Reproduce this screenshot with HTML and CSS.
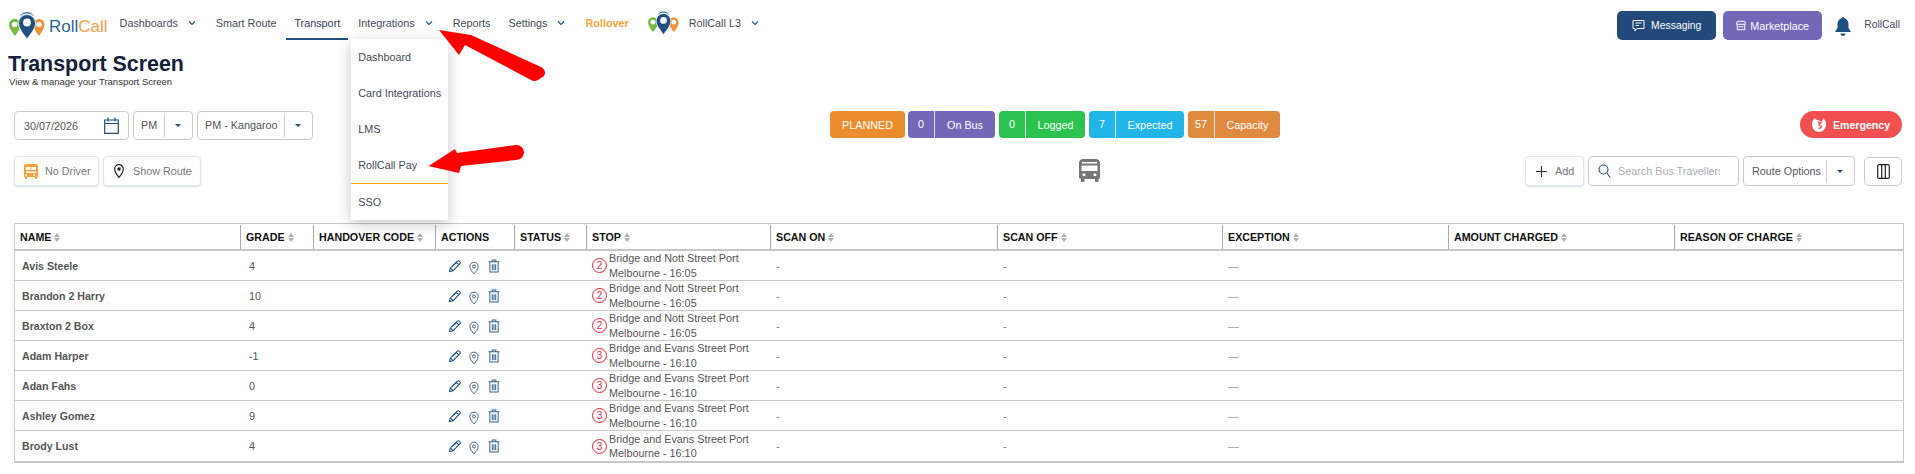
FILE: index.html
```html
<!DOCTYPE html>
<html lang="en">
<head>
    <meta charset="UTF-8">
    <title>Transport Screen</title>
    <link rel="stylesheet" href="styles.css">
</head>
<body>
    <svg class="sprite" width="0" height="0">
        <symbol id="logo" viewBox="0 0 36 27">
            <path d="M6 24C3 20 0 16.500 0 12.500a5.700 5.700 0 0 1 11.400 0C11.400 16.500 9 20 6 24Z" fill="#7cb84a"/>
            <circle cx="5.700" cy="12.500" r="2.800" fill="#fff"/>
            <path d="M30 24c-3-4-5.500-7.500-5.500-11.500a5.500 5.500 0 0 1 11 0C35.500 16.500 33 20 30 24Z" fill="#f0923a"/>
            <circle cx="30" cy="12.500" r="2.700" fill="#fff"/>
            <path d="M18 27C14 21.500 9.500 16.500 9.500 11a8.500 8.500 0 0 1 17 0C26.500 16.500 22 21.500 18 27Z" fill="#1f5080" stroke="#fff" stroke-width=".8"/>
            <circle cx="18" cy="10.500" r="3.900" fill="#fff"/>
            <path d="M11.500 3.500a9.500 9.500 0 0 1 13 0M13.500 1.500a10 10 0 0 1 9 0" fill="none" stroke="#3f77a6" stroke-width=".9"/>
        </symbol>
        <symbol id="chevron" viewBox="0 0 8 6">
            <path d="M1 1.500l3 3 3-3" fill="none" stroke="#1f5080" stroke-width="1.100"/>
        </symbol>
        <symbol id="pencil" viewBox="0 0 14 14">
            <path d="M1.500 12.500l1-4L10 1.200c.7-.6 1.500-.6 2.100 0l.7.7c.6.600.6 1.400 0 2.100L5.500 11.500ZM2.500 8.500l3 3M9 2.500l2.500 2.500M4 7.500l5.500-5" fill="none" stroke="#1f5080" stroke-width="1.100"/>
        </symbol>
        <symbol id="pin" viewBox="0 0 12 16">
            <path d="M6 15C3.500 12 1 9.500 1 6a5 5 0 0 1 10 0C11 9.500 8.500 12 6 15Z" fill="none" stroke="#1f4a70" stroke-width="1"/>
            <circle cx="6" cy="6.200" r="1.800" fill="none" stroke="#1f4a70" stroke-width="1"/>
        </symbol>
        <symbol id="trash" viewBox="0 0 13 15">
            <path d="M.5 3h12M4.500 3V1h4v2M2 3v11h9V3M4.700 5.500v6.500M6.500 5.500v6.500M8.300 5.500v6.500" fill="none" stroke="#3a6488" stroke-width="1.100"/>
        </symbol>
    </svg>

    <header class="topbar">
        <svg class="logo"><use href="#logo"/></svg>
        <span class="brand"><span class="brand-roll">Roll</span><span class="brand-call">Call</span></span>
        <nav class="nav">
            <a class="nav-item">Dashboards <svg class="chev"><use href="#chevron"/></svg></a>
            <a class="nav-item">Smart Route</a>
            <a class="nav-item active">Transport</a>
            <div class="nav-item">Integrations <svg class="chev"><use href="#chevron"/></svg>
                <div class="menu">
                    <a class="menu-item">Dashboard</a>
                    <a class="menu-item">Card Integrations</a>
                    <a class="menu-item">LMS</a>
                    <a class="menu-item current">RollCall Pay</a>
                    <a class="menu-item">SSO</a>
                </div>
            </div>
            <a class="nav-item">Reports</a>
            <a class="nav-item">Settings <svg class="chev"><use href="#chevron"/></svg></a>
            <a class="nav-item rollover">Rollover</a>
            <svg class="logo-small"><use href="#logo"/></svg>
            <a class="nav-item">RollCall L3 <svg class="chev"><use href="#chevron"/></svg></a>
        </nav>
        <div class="top-actions">
            <button class="top-btn messaging">
                <svg width="13" height="13" viewBox="0 0 13 13"><path d="M1 1.500h11v8H5l-2 2.500v-2.500H1ZM3.500 4h6M3.500 6.500h3.500" fill="none" stroke="#fff" stroke-width="1"/></svg>
                Messaging
            </button>
            <button class="top-btn marketplace">
                <svg width="10" height="11" viewBox="0 0 12 12"><path d="M1.500 1h9l1 3.500H.5ZM1.500 5v6h9V5M3 7.500h6" fill="none" stroke="#fff" stroke-width="1.200"/></svg>
                Marketplace
            </button>
            <svg class="bell" width="16" height="19" viewBox="0 0 16 19"><path d="M8 0c.8 0 1.200.6 1.200 1.300C12 2 13.500 4.500 13.500 7.500v3.500L16 15H0l2.500-4V7.500c0-3 1.500-5.500 4.300-6.200C6.800.6 7.200 0 8 0ZM5.500 16.500h5c0 1.500-1 2.500-2.500 2.500s-2.500-1-2.500-2.500Z" fill="#1f5080"/></svg>
            <span class="user">RollCall</span>
        </div>
    </header>

    <div class="page-title">
        <h1>Transport Screen</h1>
        <p>View &amp; manage your Transport Screen</p>
    </div>

    <section class="row-controls">
        <div class="control-group">
            <div class="field date-field">
                <span>30/07/2026</span>
                <svg width="15" height="17" viewBox="0 0 15 17"><path d="M.7 3h13.600v13.300H.7ZM.7 6.500h13.600M4 .5v4M11 .5v4" fill="none" stroke="#1f5080" stroke-width="1.200"/></svg>
            </div>
            <div class="field select-field period"><span class="select-label">PM</span><span class="select-caret"></span></div>
            <div class="field select-field bus"><span class="select-label">PM - Kangaroo</span><span class="select-caret"></span></div>
        </div>
        <div class="badges">
            <span class="badge planned"><span class="badge-text">PLANNED</span></span>
            <span class="badge onbus"><span class="badge-num">0</span><span class="badge-text">On Bus</span></span>
            <span class="badge logged"><span class="badge-num">0</span><span class="badge-text">Logged</span></span>
            <span class="badge expected"><span class="badge-num">7</span><span class="badge-text">Expected</span></span>
            <span class="badge capacity"><span class="badge-num">57</span><span class="badge-text">Capacity</span></span>
        </div>
        <button class="emergency">
            <svg width="14" height="15" viewBox="0 0 14 15"><path d="M3 1c-2 1.500-3 3.500-3 6.500C0 11.500 3 15 7 15s7-3.500 7-7.500C14 4.500 13 2.500 11 1c.5 2-.5 3-2 3.500C7.500 3.500 6 3 5 3 4 3 3.300 2.200 3 1Z" fill="#fff"/><path d="M6 5.500h3L7 8l2.500 1.500c-.5 1.500-2 2-3.500 1.500" fill="none" stroke="#f25050" stroke-width="1.300"/></svg>
            Emergency
        </button>
    </section>

    <section class="row-tools">
        <div class="control-group">
            <button class="tool-btn driver">
                <svg width="14" height="15" viewBox="0 0 14 15"><path d="M2 0h10c1 0 2 1 2 2v10c0 .8-.5 1-1 1v2h-2v-2H3v2H1v-2c-.5 0-1-.2-1-1V2C0 1 1 0 2 0Zm0 3v3h4.500V3Zm5.500 0v3H12V3ZM2 7.500V9h10V7.500ZM3 10.300a1 1 0 1 0 0 1.400Zm8 0a1 1 0 1 0 0 1.400Z" fill="#f5a53a" fill-rule="evenodd"/></svg>
                No Driver
            </button>
            <button class="tool-btn route">
                <svg width="10" height="14" viewBox="0 0 10 14"><path d="M5 13.300C3 11 .7 8.500.7 5a4.300 4.300 0 0 1 8.600 0C9.300 8.500 7 11 5 13.300Z" fill="none" stroke="#222" stroke-width="1.200"/><circle cx="5" cy="5" r="1.800" fill="#222"/></svg>
                Show Route
            </button>
        </div>
        <svg class="bus-icon" width="21" height="23" viewBox="0 0 21 23"><path d="M4 0h13c2 0 4 1.500 4 4v14c0 1-.5 1.500-1.500 1.800V22a1 1 0 0 1-1 1h-1.500a1 1 0 0 1-1-1v-2H5.500v2a1 1 0 0 1-1 1H3a1 1 0 0 1-1-1v-2.200C.5 19.500 0 19 0 18V4C0 1.500 2 0 4 0Zm-1 3v1.500h15V3Zm-.5 3.500V12h16V6.500ZM5 14.300a1.500 1.500 0 1 0 0 3 1.500 1.500 0 0 0 0-3Zm11 0a1.500 1.500 0 1 0 0 3 1.500 1.500 0 0 0 0-3Z" fill="#777" fill-rule="evenodd"/></svg>
        <div class="tools-right">
            <button class="tool-btn add">
                <svg width="13" height="13" viewBox="0 0 13 13"><path d="M6.500 1v11M1 6.500h11" fill="none" stroke="#333" stroke-width="1.100"/></svg>
                Add
            </button>
            <div class="field search">
                <svg width="13" height="14" viewBox="0 0 13 14"><circle cx="5.500" cy="5.500" r="4.500" fill="none" stroke="#1f5080" stroke-width="1.100"/><path d="M8.800 9l3.500 4.500" stroke="#1f5080" stroke-width="1.100"/></svg>
                <input class="search-input" placeholder="Search Bus Travellers">
            </div>
            <div class="field select-field route-options"><span class="select-label">Route Options</span><span class="select-caret"></span></div>
            <button class="columns-btn">
                <svg width="13" height="15" viewBox="0 0 13 15"><path d="M2 .7h9c.7 0 1.300.6 1.300 1.300v11c0 .7-.6 1.300-1.300 1.300H2c-.7 0-1.300-.6-1.300-1.300V2C.7 1.300 1.300.7 2 .7ZM4.700.7v13.600M8.300.7v13.600" fill="none" stroke="#222" stroke-width="1.200"/></svg>
            </button>
        </div>
    </section>

    <table class="travellers">
        <colgroup>
            <col class="c-name"><col class="c-grade"><col class="c-code"><col class="c-actions"><col class="c-status"><col class="c-stop">
            <col class="c-on"><col class="c-off"><col class="c-exc"><col class="c-amount"><col class="c-reason">
        </colgroup>
        <thead>
            <tr>
                <th><span class="th-box">NAME <i class="sort"></i></span></th>
                <th><span class="th-box">GRADE <i class="sort"></i></span></th>
                <th><span class="th-box">HANDOVER CODE <i class="sort"></i></span></th>
                <th><span class="th-box">ACTIONS</span></th>
                <th><span class="th-box">STATUS <i class="sort"></i></span></th>
                <th><span class="th-box">STOP <i class="sort"></i></span></th>
                <th><span class="th-box">SCAN ON <i class="sort"></i></span></th>
                <th><span class="th-box">SCAN OFF <i class="sort"></i></span></th>
                <th><span class="th-box">EXCEPTION <i class="sort"></i></span></th>
                <th><span class="th-box">AMOUNT CHARGED <i class="sort"></i></span></th>
                <th><span class="th-box">REASON OF CHARGE <i class="sort"></i></span></th>
            </tr>
        </thead>
        <tbody>
            <tr>
                <td class="name">Avis Steele</td><td class="grade">4</td><td></td>
                <td><div class="row-actions"><svg class="a-pencil"><use href="#pencil"/></svg><svg class="a-pin"><use href="#pin"/></svg><svg class="a-trash"><use href="#trash"/></svg></div></td>
                <td></td>
                <td><div class="stop"><span class="stop-num">2</span><span class="stop-text">Bridge and Nott Street Port Melbourne - 16:05</span></div></td>
                <td class="dash">-</td><td class="dash">-</td><td class="long-dash">—</td><td></td><td></td>
            </tr>
            <tr>
                <td class="name">Brandon 2 Harry</td><td class="grade">10</td><td></td>
                <td><div class="row-actions"><svg class="a-pencil"><use href="#pencil"/></svg><svg class="a-pin"><use href="#pin"/></svg><svg class="a-trash"><use href="#trash"/></svg></div></td>
                <td></td>
                <td><div class="stop"><span class="stop-num">2</span><span class="stop-text">Bridge and Nott Street Port Melbourne - 16:05</span></div></td>
                <td class="dash">-</td><td class="dash">-</td><td class="long-dash">—</td><td></td><td></td>
            </tr>
            <tr>
                <td class="name">Braxton 2 Box</td><td class="grade">4</td><td></td>
                <td><div class="row-actions"><svg class="a-pencil"><use href="#pencil"/></svg><svg class="a-pin"><use href="#pin"/></svg><svg class="a-trash"><use href="#trash"/></svg></div></td>
                <td></td>
                <td><div class="stop"><span class="stop-num">2</span><span class="stop-text">Bridge and Nott Street Port Melbourne - 16:05</span></div></td>
                <td class="dash">-</td><td class="dash">-</td><td class="long-dash">—</td><td></td><td></td>
            </tr>
            <tr>
                <td class="name">Adam Harper</td><td class="grade">-1</td><td></td>
                <td><div class="row-actions"><svg class="a-pencil"><use href="#pencil"/></svg><svg class="a-pin"><use href="#pin"/></svg><svg class="a-trash"><use href="#trash"/></svg></div></td>
                <td></td>
                <td><div class="stop"><span class="stop-num">3</span><span class="stop-text">Bridge and Evans Street Port Melbourne - 16:10</span></div></td>
                <td class="dash">-</td><td class="dash">-</td><td class="long-dash">—</td><td></td><td></td>
            </tr>
            <tr>
                <td class="name">Adan Fahs</td><td class="grade">0</td><td></td>
                <td><div class="row-actions"><svg class="a-pencil"><use href="#pencil"/></svg><svg class="a-pin"><use href="#pin"/></svg><svg class="a-trash"><use href="#trash"/></svg></div></td>
                <td></td>
                <td><div class="stop"><span class="stop-num">3</span><span class="stop-text">Bridge and Evans Street Port Melbourne - 16:10</span></div></td>
                <td class="dash">-</td><td class="dash">-</td><td class="long-dash">—</td><td></td><td></td>
            </tr>
            <tr>
                <td class="name">Ashley Gomez</td><td class="grade">9</td><td></td>
                <td><div class="row-actions"><svg class="a-pencil"><use href="#pencil"/></svg><svg class="a-pin"><use href="#pin"/></svg><svg class="a-trash"><use href="#trash"/></svg></div></td>
                <td></td>
                <td><div class="stop"><span class="stop-num">3</span><span class="stop-text">Bridge and Evans Street Port Melbourne - 16:10</span></div></td>
                <td class="dash">-</td><td class="dash">-</td><td class="long-dash">—</td><td></td><td></td>
            </tr>
            <tr>
                <td class="name">Brody Lust</td><td class="grade">4</td><td></td>
                <td><div class="row-actions"><svg class="a-pencil"><use href="#pencil"/></svg><svg class="a-pin"><use href="#pin"/></svg><svg class="a-trash"><use href="#trash"/></svg></div></td>
                <td></td>
                <td><div class="stop"><span class="stop-num">3</span><span class="stop-text">Bridge and Evans Street Port Melbourne - 16:10</span></div></td>
                <td class="dash">-</td><td class="dash">-</td><td class="long-dash">—</td><td></td><td></td>
            </tr>
        </tbody>
    </table>

    <!-- annotation arrows drawn over the screenshot -->
    <svg class="annotation" width="1915" height="474" viewBox="0 0 1915 474">
        <path d="M439 30L471 35L541 67Q547 71 544 76L538 80Q534 82 531 80L465 45L459 55Z" fill="#f00"/>
        <path d="M428.500 166L455 149L457 153L516 145Q523 145 524 152Q524 159 516 160L461 166L459 173Z" fill="#f00"/>
    </svg>
</body>
</html>
```

FILE: styles.css
```css
* {
    margin: 0;
    padding: 0;
    box-sizing: border-box;
}

html, body {
    width: 100%;
    height: 100%;
    overflow: hidden;
    background: #ffffff;
    font-family: "Liberation Sans", Arial, sans-serif;
    font-size: 10.8px;
    color: #444c58;
}

.sprite {
    position: absolute;
}

button {
    font-family: inherit;
    font-size: inherit;
    cursor: pointer;
}

/* top bar */
.topbar {
    display: flex;
    height: 40px;
    padding: 10px 15px 0 9px;
}

.logo {
    width: 36px;
    height: 27px;
    margin-top: 2px;
}

.brand {
    margin-left: 4px;
    font-size: 17px;
    line-height: 34px;
}

.brand-roll {
    color: #2a6496;
}

.brand-call {
    color: #f5a04a;
}

.nav {
    display: flex;
    gap: 2px;
    margin-left: 4px;
}

.nav-item {
    position: relative;
    display: flex;
    align-items: center;
    gap: 6px;
    height: 30px;
    padding: 0 8px 3px;
    white-space: nowrap;
    border-bottom: 2px solid transparent;
}

.nav-item.active {
    color: #33405a;
    border-bottom-color: #1f5080;
}

.nav-item.rollover {
    font-weight: 700;
    color: #f5a53a;
}

.chev {
    width: 8px;
    height: 6px;
    margin: 0 2px 0 4px;
}

.logo-small {
    width: 31px;
    height: 24px;
    margin: 1px 0 0 9px;
}

.menu {
    position: absolute;
    z-index: 5;
    top: 29px;
    left: 1px;
    display: flex;
    flex-direction: column;
    width: 97px;
    height: 181px;
    background: #ffffff;
    box-shadow: 0 4px 14px rgba(0, 0, 0, 0.22);
}

.menu-item {
    display: flex;
    align-items: center;
    flex: none;
    height: 36px;
    padding-left: 7px;
}

.menu-item.current {
    height: 37px;
    padding-bottom: 1px;
    border-bottom: 1px solid #f5a623;
}

.top-actions {
    display: flex;
    align-items: flex-start;
    margin-left: auto;
    font-size: 10.4px;
}

.top-btn {
    display: flex;
    align-items: center;
    justify-content: center;
    gap: 6px;
    width: 99px;
    height: 29px;
    margin: 1px 0 0;
    border: none;
    border-radius: 5px;
    color: #ffffff;
}

.top-btn.messaging {
    background: #22497a;
}

.top-btn.marketplace {
    gap: 4px;
    margin-left: 7px;
    background: #7467b8;
    font-size: 10.8px;
}

.bell {
    margin: 7px 0 0 13px;
}

.user {
    margin: 9px 0 0 13px;
}

/* title */
.page-title {
    margin: 12px 0 0 8px;
}

.page-title h1 {
    font-size: 21.4px;
    line-height: 24px;
    font-weight: 700;
    color: #15213a;
}

.page-title p {
    margin-left: 1px;
    font-size: 9.5px;
    line-height: 12px;
    color: #333;
}

/* controls */
.row-controls {
    display: grid;
    grid-template-columns: 816px 450px 1fr;
    margin-top: 23px;
    padding: 0 13px 0 14px;
}

.control-group {
    display: flex;
    gap: 4px;
}

.field {
    display: flex;
    align-items: center;
    height: 29px;
    background: #ffffff;
    border: 1px solid #cccccc;
    border-radius: 4px;
    color: #555;
}

.date-field {
    justify-content: space-between;
    width: 115px;
    padding: 0 9px;
}

.select-field {
    padding-left: 7px;
}

.select-label {
    flex: 1;
    line-height: 27px;
    white-space: nowrap;
}

.select-caret {
    position: relative;
    flex: none;
    width: 28px;
    height: 23px;
    border-left: 1px solid #cccccc;
}

.select-caret::after {
    content: "";
    position: absolute;
    top: 10px;
    left: 10px;
    border-top: 3px solid #1f5080;
    border-left: 3px solid transparent;
    border-right: 3px solid transparent;
}

.select-field.period {
    width: 60px;
}

.select-field.bus {
    width: 116px;
}

.select-field.route-options {
    width: 112px;
    height: 30px;
    padding-left: 8px;
}

.badges {
    display: flex;
    gap: 3px;
    color: #ffffff;
}

.badge {
    display: flex;
    align-items: center;
    justify-content: center;
    height: 27px;
    border-radius: 4px;
}

.badge-num {
    flex: none;
    width: 27px;
    line-height: 27px;
    text-align: center;
    border-right: 1px solid rgba(255, 255, 255, 0.8);
}

.badge-text {
    flex: 1;
    text-align: center;
}

.badge.planned {
    width: 75px;
    background: #eb8c2e;
}

.badge.onbus {
    width: 87px;
    background: #7467b8;
}

.badge.logged {
    width: 86px;
    margin-left: 1px;
    background: #2cc24f;
}

.badge.expected {
    width: 95px;
    margin-left: 1px;
    background: #22b5e8;
}

.badge.capacity {
    width: 92px;
    margin-left: 1px;
    background: #e08a40;
}

.emergency {
    display: flex;
    align-items: center;
    justify-content: center;
    gap: 7px;
    justify-self: end;
    width: 102px;
    height: 27px;
    border: none;
    border-radius: 14px;
    background: #f25050;
    color: #ffffff;
    font-weight: 700;
    font-size: 10.6px;
}

.row-tools {
    display: flex;
    align-items: flex-start;
    margin-top: 16px;
    padding: 0 13px 0 14px;
}

.tool-btn {
    display: flex;
    align-items: center;
    height: 30px;
    background: #ffffff;
    border: 1px solid #dfe8e8;
    border-radius: 4px;
    box-shadow: 0 1px 2px rgba(120, 150, 150, 0.3);
    color: #777;
}

.tool-btn.driver {
    gap: 7px;
    width: 85px;
    padding-left: 9px;
}

.tool-btn.route {
    gap: 9px;
    width: 98px;
    padding-left: 10px;
}

.tool-btn.add {
    gap: 7px;
    width: 59px;
    padding-left: 9px;
}

.bus-icon {
    margin: 3px 0 0 878px;
}

.tools-right {
    display: flex;
    gap: 4px;
    margin-left: auto;
}

.field.search {
    gap: 7px;
    width: 151px;
    height: 30px;
    padding-left: 9px;
}

.search-input {
    width: 102px;
    border: none;
    outline: none;
    font-family: inherit;
    font-size: 10.8px;
}

.search-input::placeholder {
    color: #aab0b5;
}

.columns-btn {
    display: flex;
    align-items: center;
    justify-content: center;
    width: 38px;
    height: 29px;
    margin: 1px 0 0 5px;
    background: #ffffff;
    border: 1px solid #cccccc;
    border-radius: 5px;
}

/* table */
.travellers {
    width: 1888px;
    margin: 37px 0 0 14px;
    table-layout: fixed;
    border-collapse: separate;
    border-spacing: 0;
    border: 1px solid #c8c8c8;
    border-bottom-width: 2px;
}

.c-name { width: 226px; }
.c-grade { width: 73px; }
.c-code { width: 122px; }
.c-actions { width: 79px; }
.c-status { width: 72px; }
.c-stop { width: 184px; }
.c-on { width: 227px; }
.c-off { width: 225px; }
.c-exc { width: 226px; }
.c-amount { width: 226px; }
.c-reason { width: 228px; }

.travellers th {
    height: 26px;
    padding: 1px 0 0;
    text-align: left;
    border-bottom: 2px solid #c8c8c8;
}

.th-box {
    display: flex;
    align-items: center;
    gap: 3px;
    height: 24px;
    padding-left: 5px;
    border-right: 1px solid #aaaaaa;
    font-size: 10.7px;
    font-weight: 700;
    color: #111;
    white-space: nowrap;
}

.travellers th:last-child .th-box {
    border-right: none;
}

.sort {
    display: inline-block;
    position: relative;
    width: 6px;
    height: 9px;
}

.sort::before,
.sort::after {
    content: "";
    position: absolute;
    left: 0;
    border-left: 3px solid transparent;
    border-right: 3px solid transparent;
}

.sort::before {
    top: 0;
    border-bottom: 4px solid #b0b0b0;
}

.sort::after {
    bottom: 0;
    border-top: 4px solid #b0b0b0;
}

.travellers td {
    height: 30px;
    padding: 0 0 0 5px;
    vertical-align: middle;
    border-bottom: 1px solid #cccccc;
    color: #555;
}

.travellers tr:last-child td {
    border-bottom: none;
}

.travellers td.name {
    padding-left: 7px;
    font-weight: 700;
    font-size: 10.6px;
    color: #555;
}

.travellers td.grade {
    padding-left: 8px;
}

.row-actions {
    display: flex;
    align-items: center;
    gap: 8px;
    padding: 1px 0 0 7px;
}

.a-pencil {
    width: 13px;
    height: 13px;
}

.a-pin {
    width: 10px;
    height: 14px;
    margin-top: 3px;
}

.a-trash {
    width: 12px;
    height: 14px;
    margin: -1px 0 0 1px;
}

.stop {
    display: flex;
    align-items: center;
    gap: 2px;
}

.stop-num {
    display: flex;
    flex: none;
    align-items: center;
    justify-content: center;
    width: 15px;
    height: 15px;
    border: 1px solid #ee2233;
    border-radius: 50%;
    color: #ee2233;
    font-size: 10px;
}

.stop-text {
    width: 150px;
    line-height: 14.5px;
}

.travellers td.dash {
    padding-left: 5px;
    color: #777;
}

.travellers td.long-dash {
    padding-left: 5px;
    color: #999;
}

.annotation {
    position: absolute;
    z-index: 10;
    top: 0;
    left: 0;
    pointer-events: none;
}
```
